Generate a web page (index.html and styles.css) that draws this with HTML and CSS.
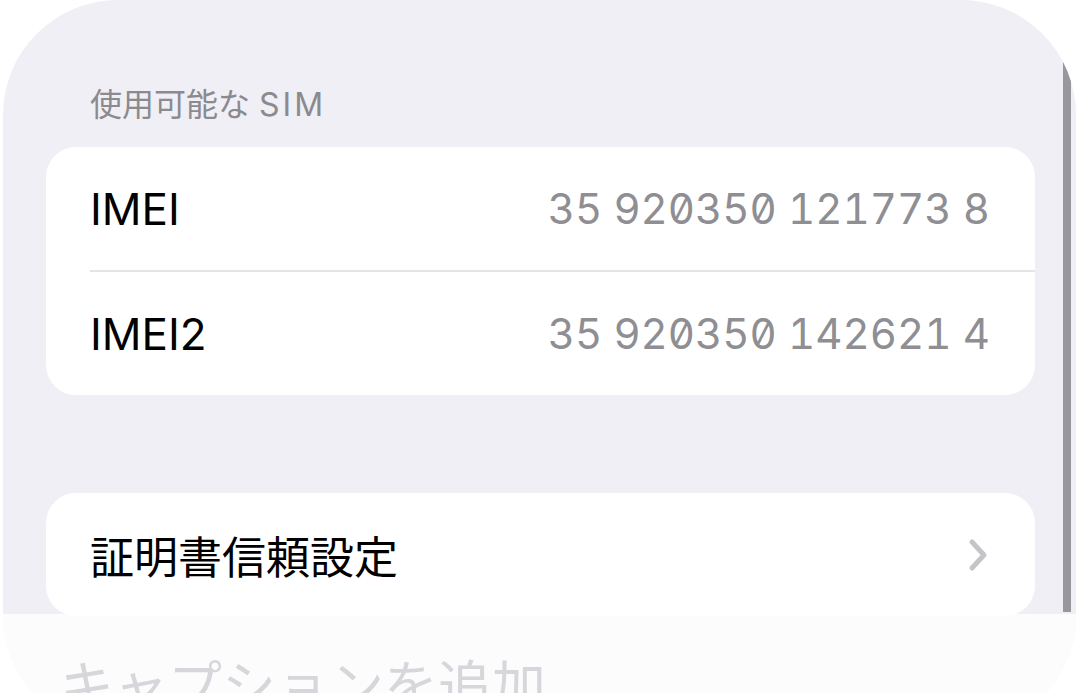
FILE: index.html
```html
<!DOCTYPE html>
<html lang="ja">
<head>
  <meta charset="UTF-8">
  <title>SIM 情報</title>
  <link rel="stylesheet" href="styles.css">
</head>
<body>
  <div class="sheet">
    <div class="scroll-thumb"></div>

    <h2 class="section-title">使用可能な <span class="latin">SIM</span></h2>

    <div class="card">
      <div class="row">
        <span class="label">IMEI</span>
        <span class="value">35 920350 121773 8</span>
      </div>
      <div class="divider"></div>
      <div class="row">
        <span class="label">IMEI2</span>
        <span class="value">35 920350 142621 4</span>
      </div>
    </div>

    <div class="card card-link">
      <div class="row">
        <span class="label">証明書信頼設定</span>
        <svg class="chevron" width="20" height="34" viewBox="0 0 20 34">
          <path d="M4 4 L16 17 L4 30" fill="none" stroke="#c5c5c9" stroke-width="5" stroke-linecap="round" stroke-linejoin="round"/>
        </svg>
      </div>
    </div>

    <div class="caption-bar">
      <span class="caption-text">キャプションを追加</span>
    </div>
  </div>
</body>
</html>
```

FILE: styles.css
```css
html, body {
  height: 100%;
  overflow: hidden;
}
body {
  margin: 0;
  background: #fff;
  font-family: "Inter", "Noto Sans CJK JP", sans-serif;
}
.sheet {
  position: relative;
  height: 730px;
  margin: 0 4px 0 3px;
  padding-top: 84px;
  box-sizing: border-box;
  background: #f0eff5;
  border-radius: 115px;
  overflow: hidden;
}
.scroll-thumb {
  position: absolute;
  top: 50px;
  right: 5px;
  width: 8px;
  height: 562px;
  background: #98979d;
  border-radius: 4px 4px 0 0;
}
.section-title {
  margin: 0 0 22px 87px;
  font-size: 32px;
  line-height: 41px;
  font-weight: 400;
  color: #8a8a8f;
}
.section-title .latin {
  letter-spacing: 3px;
}
.card {
  margin: 0 41px 0 43px;
  background: #fff;
  border-radius: 30px;
}
.card-link {
  margin-top: 98px;
}
.row {
  display: flex;
  align-items: center;
  justify-content: space-between;
  height: 123px;
  padding: 0 45px 0 44px;
}
.label {
  font-size: 44px;
  color: #000;
}
.value {
  font-size: 42px;
  color: #8e8e93;
  font-feature-settings: "tnum", "zero";
}
.divider {
  height: 2px;
  margin-left: 44px;
  background: #e3e3e8;
}
.chevron {
  display: block;
  margin-right: 2px;
}
.caption-bar {
  margin-top: -2px;
  height: 200px;
  padding: 41px 0 0 57px;
  background: rgba(255, 255, 255, 0.82);
}
.caption-text {
  font-size: 54px;
  line-height: 64px;
  color: #d6d6db;
}
```
